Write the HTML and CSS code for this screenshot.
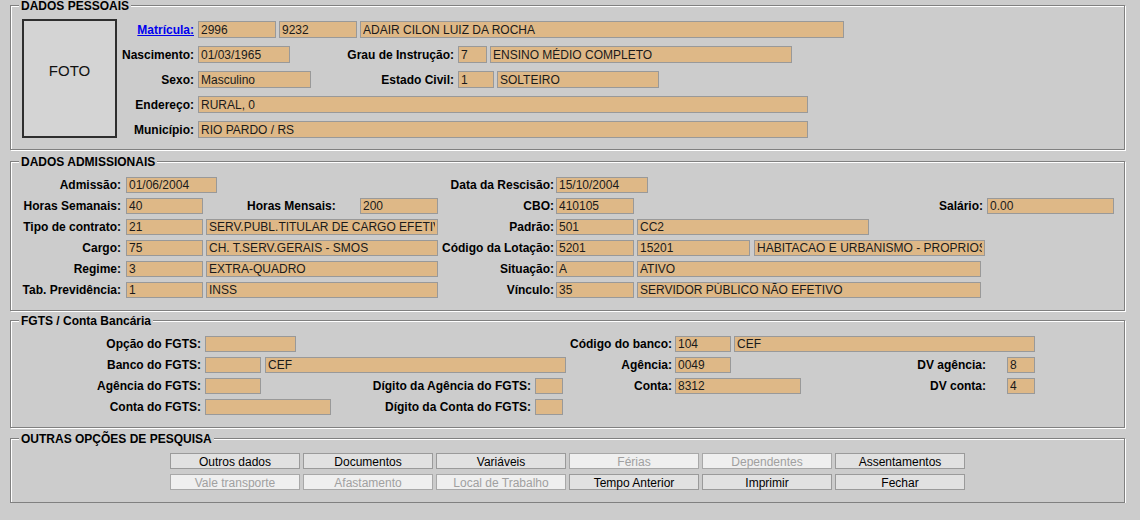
FILE: index.html
```html
<!DOCTYPE html>
<html lang="pt-BR">
<head>
<meta charset="utf-8">
<title>Consulta de Servidor</title>
<link rel="stylesheet" href="styles.css">
</head>
<body>
<div class="page">

<fieldset class="fs fs1">
  <legend>DADOS PESSOAIS</legend>
  <div class="pess">
    <div class="foto">FOTO</div>
    <div class="rows rows-p">
      <div class="row">
        <span class="lbl p-l"><a href="#">Matrícula:</a></span>
        <input class="f w78" value="2996" readonly>
        <input class="f w78 g3" value="9232" readonly>
        <input class="f w484 g3" value="ADAIR CILON LUIZ DA ROCHA" readonly>
      </div>
      <div class="row">
        <span class="lbl p-l">Nascimento:</span>
        <input class="f w92" value="01/03/1965" readonly>
        <span class="lbl p-grau">Grau de Instrução:</span>
        <input class="f w29" value="7" readonly>
        <input class="f w302 g3" value="ENSINO MÉDIO COMPLETO" readonly>
      </div>
      <div class="row">
        <span class="lbl p-l">Sexo:</span>
        <input class="f w113" value="Masculino" readonly>
        <span class="lbl p-est">Estado Civil:</span>
        <input class="f w36" value="1" readonly>
        <input class="f w162 g3" value="SOLTEIRO" readonly>
      </div>
      <div class="row">
        <span class="lbl p-l">Endereço:</span>
        <input class="f w610" value="RURAL, 0" readonly>
      </div>
      <div class="row">
        <span class="lbl p-l">Município:</span>
        <input class="f w610" value="RIO PARDO / RS" readonly>
      </div>
    </div>
  </div>
</fieldset>

<fieldset class="fs fs2">
  <legend>DADOS ADMISSIONAIS</legend>
  <div class="rows rows-s">
    <div class="row">
      <span class="lbl a-l">Admissão:</span>
      <div class="a-blk"><input class="f w91" value="01/06/2004" readonly></div>
      <span class="lbl a-r">Data da Rescisão:</span>
      <input class="f w92" value="15/10/2004" readonly>
    </div>
    <div class="row">
      <span class="lbl a-l">Horas Semanais:</span>
      <div class="a-blk">
        <input class="f w77" value="40" readonly>
        <span class="lbl a-hm">Horas Mensais:</span>
        <input class="f w78" value="200" readonly>
      </div>
      <span class="lbl a-r">CBO:</span>
      <input class="f w78" value="410105" readonly>
      <span class="lbl a-sal">Salário:</span>
      <input class="f w127" value="0.00" readonly>
    </div>
    <div class="row">
      <span class="lbl a-l">Tipo de contrato:</span>
      <div class="a-blk">
        <input class="f w77" value="21" readonly>
        <input class="f w232 g3" value="SERV.PUBL.TITULAR DE CARGO EFETIVO" readonly>
      </div>
      <span class="lbl a-r">Padrão:</span>
      <input class="f w78" value="501" readonly>
      <input class="f w232 g3" value="CC2" readonly>
    </div>
    <div class="row">
      <span class="lbl a-l">Cargo:</span>
      <div class="a-blk">
        <input class="f w77" value="75" readonly>
        <input class="f w232 g3" value="CH. T.SERV.GERAIS - SMOS" readonly>
      </div>
      <span class="lbl a-r">Código da Lotação:</span>
      <input class="f w78" value="5201" readonly>
      <input class="f w113 g3" value="15201" readonly>
      <input class="f w231 g4" value="HABITACAO E URBANISMO - PROPRIOS" readonly>
    </div>
    <div class="row">
      <span class="lbl a-l">Regime:</span>
      <div class="a-blk">
        <input class="f w77" value="3" readonly>
        <input class="f w232 g3" value="EXTRA-QUADRO" readonly>
      </div>
      <span class="lbl a-r">Situação:</span>
      <input class="f w78" value="A" readonly>
      <input class="f w344 g3" value="ATIVO" readonly>
    </div>
    <div class="row">
      <span class="lbl a-l">Tab. Previdência:</span>
      <div class="a-blk">
        <input class="f w77" value="1" readonly>
        <input class="f w232 g3" value="INSS" readonly>
      </div>
      <span class="lbl a-r">Vínculo:</span>
      <input class="f w78" value="35" readonly>
      <input class="f w344 g3" value="SERVIDOR PÚBLICO NÃO EFETIVO" readonly>
    </div>
  </div>
</fieldset>

<fieldset class="fs fs3">
  <legend>FGTS / Conta Bancária</legend>
  <div class="rows rows-s">
    <div class="row">
      <span class="lbl c-l">Opção do FGTS:</span>
      <input class="f w91" value="" readonly>
      <span class="lbl c-cod">Código do banco:</span>
      <input class="f w56" value="104" readonly>
      <input class="f w301 g3" value="CEF" readonly>
    </div>
    <div class="row">
      <span class="lbl c-l">Banco do FGTS:</span>
      <input class="f w56" value="" readonly>
      <input class="f w301 g4" value="CEF" readonly>
      <span class="lbl c-ag">Agência:</span>
      <input class="f w56" value="0049" readonly>
      <span class="lbl c-dva">DV agência:</span>
      <input class="f w28" value="8" readonly>
    </div>
    <div class="row">
      <span class="lbl c-l">Agência do FGTS:</span>
      <input class="f w56" value="" readonly>
      <span class="lbl c-dag">Dígito da Agência do FGTS:</span>
      <input class="f w28" value="" readonly>
      <span class="lbl c-ct">Conta:</span>
      <input class="f w126" value="8312" readonly>
      <span class="lbl c-dvc">DV conta:</span>
      <input class="f w28" value="4" readonly>
    </div>
    <div class="row">
      <span class="lbl c-l">Conta do FGTS:</span>
      <input class="f w126" value="" readonly>
      <span class="lbl c-dct">Dígito da Conta do FGTS:</span>
      <input class="f w28" value="" readonly>
    </div>
  </div>
</fieldset>

<fieldset class="fs fs4">
  <legend>OUTRAS OPÇÕES DE PESQUISA</legend>
  <div class="rows rows-s btns">
    <div class="row">
      <button class="btn">Outros dados</button>
      <button class="btn">Documentos</button>
      <button class="btn">Variáveis</button>
      <button class="btn" disabled>Férias</button>
      <button class="btn" disabled>Dependentes</button>
      <button class="btn">Assentamentos</button>
    </div>
    <div class="row">
      <button class="btn" disabled>Vale transporte</button>
      <button class="btn" disabled>Afastamento</button>
      <button class="btn" disabled>Local de Trabalho</button>
      <button class="btn">Tempo Anterior</button>
      <button class="btn">Imprimir</button>
      <button class="btn">Fechar</button>
    </div>
  </div>
</fieldset>

</div>
</body>
</html>
```

FILE: styles.css
```css
* { box-sizing: border-box; }

html, body {
  margin: 0;
  padding: 0;
  background: #cccccc;
}

body {
  font-family: "Liberation Sans", Arial, Helvetica, sans-serif;
  font-size: 12px;
  line-height: 14px;
  color: #000;
}

.page {
  width: 1140px;
  padding: 0 0 0 10px;
}

/* grouped boxes */
.fs {
  width: 1115px;
  min-width: 0;
  margin: 0;
  padding: 0;
  border: 1px solid #808080;
  box-shadow: inset 1px 1px 0 #fff, 1px 1px 0 #fff;
}

.fs legend {
  margin-left: 8px;
  padding: 0 2px;
  height: 11px;
  line-height: 13px;
  font-weight: bold;
  background: #cccccc;
  color: #000;
}

.fs1 { padding-top: 8px; padding-bottom: 11px; }
.fs2 { margin-top: 6px; padding-top: 10px; padding-bottom: 12px; }
.fs3 { margin-top: 4px; padding-top: 10px; padding-bottom: 12px; }
.fs4 { margin-top: 5px; padding-top: 9px; padding-bottom: 12px; }

/* personal data block */
.pess {
  display: flex;
  align-items: flex-start;
  margin-left: 11px;
}

.foto {
  flex: none;
  width: 95px;
  height: 119px;
  border: 2px solid #2e2e2e;
  background: #d4d4d4;
  text-align: center;
  font-size: 15px;
  line-height: 16px;
  padding-top: 42px;
  color: #111;
}

.rows {
  display: flex;
  flex-direction: column;
}

.rows-p {
  padding-top: 2px;
  gap: 8px;
}
.rows-p .row { height: 17px; }

.rows-s { gap: 5px; }
.rows-s .row { height: 16px; }

.row {
  display: flex;
  align-items: center;
}

/* labels */
.lbl {
  flex: none;
  font-weight: bold;
  text-align: right;
  white-space: nowrap;
  line-height: 14px;
}

.lbl a {
  color: #0000ee;
  text-decoration: underline;
}

.p-l   { width: 81px;  padding-right: 4px; }
.p-grau{ width: 168px; padding-right: 4px; }
.p-est { width: 147px; padding-right: 4px; }

.a-l   { width: 115px; padding-right: 5px; }
.a-blk { flex: none; width: 312px; display: flex; align-items: center; }
.a-hm  { width: 157px; padding-left: 44px; text-align: left; }
.a-r   { width: 118px; padding-right: 2px; }
.a-sal { width: 353px; padding-right: 4px; }

.c-l   { width: 194px; padding-right: 4px; }
.c-cod { width: 379px; padding-right: 3px; }
.c-ag  { width: 109px; padding-right: 3px; }
.c-dva { width: 276px; padding-right: 21px; }
.c-dag { width: 274px; padding-right: 4px; }
.c-ct  { width: 112px; padding-right: 3px; }
.c-dvc { width: 206px; padding-right: 21px; }
.c-dct { width: 204px; padding-right: 4px; }

/* read-only fields */
.f {
  flex: none;
  height: 16px;
  margin: 0;
  padding: 0 2px;
  border: 1px solid #999999;
  border-radius: 0;
  background: #deb887;
  color: #1a1a1a;
  font-family: "Liberation Sans", Arial, Helvetica, sans-serif;
  font-size: 12px;
  outline: none;
}
.rows-p .f { height: 17px; }

.g3 { margin-left: 3px; }
.g4 { margin-left: 4px; }

.w28  { width: 28px; }
.w29  { width: 29px; }
.w36  { width: 36px; }
.w56  { width: 56px; }
.w77  { width: 77px; }
.w78  { width: 78px; }
.w91  { width: 91px; }
.w92  { width: 92px; }
.w113 { width: 113px; }
.w126 { width: 126px; }
.w127 { width: 127px; }
.w162 { width: 162px; }
.w231 { width: 231px; }
.w232 { width: 232px; }
.w301 { width: 301px; }
.w302 { width: 302px; }
.w344 { width: 344px; }
.w484 { width: 484px; }
.w610 { width: 610px; }

/* buttons */
.btns { margin-left: 159px; }

.btn {
  flex: none;
  width: 130px;
  height: 16px;
  margin: 0 3px 0 0;
  padding: 2px 0 0;
  border: 1px solid #9a9a9a;
  border-radius: 0;
  background: #e1e1e1;
  color: #000;
  font-family: "Liberation Sans", Arial, Helvetica, sans-serif;
  font-size: 12px;
  line-height: 12px;
}

.btn:disabled {
  background: #efefef;
  color: #a0a0a0;
  border-color: #a8a8a8;
}
```
